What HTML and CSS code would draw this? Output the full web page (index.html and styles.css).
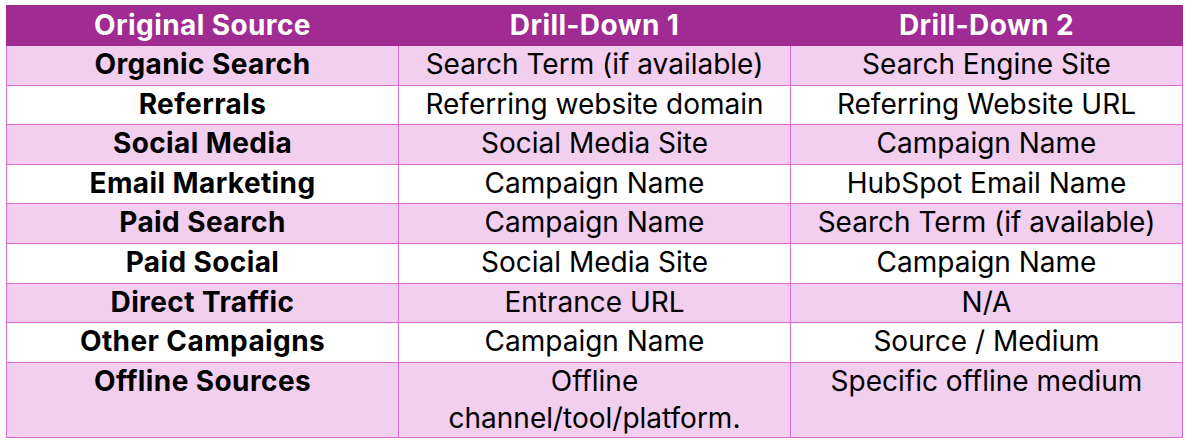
FILE: index.html
```html
<!DOCTYPE html>
<html>
<head>
<meta charset="utf-8">
<link rel="stylesheet" href="styles.css">
</head>
<body>
<div class="wrap">
<table class="grid">
<thead>
<tr><th>Original Source</th><th>Drill-Down 1</th><th>Drill-Down 2</th></tr>
</thead>
<tbody>
<tr class="band"><td class="src">Organic Search</td><td>Search Term (if available)</td><td>Search Engine Site</td></tr>
<tr><td class="src">Referrals</td><td>Referring website domain</td><td>Referring Website URL</td></tr>
<tr class="band"><td class="src">Social Media</td><td>Social Media Site</td><td>Campaign Name</td></tr>
<tr><td class="src">Email Marketing</td><td>Campaign Name</td><td>HubSpot Email Name</td></tr>
<tr class="band"><td class="src">Paid Search</td><td>Campaign Name</td><td>Search Term (if available)</td></tr>
<tr><td class="src">Paid Social</td><td>Social Media Site</td><td>Campaign Name</td></tr>
<tr class="band"><td class="src">Direct Traffic</td><td>Entrance URL</td><td>N/A</td></tr>
<tr><td class="src">Other Campaigns</td><td>Campaign Name</td><td>Source / Medium</td></tr>
<tr class="band"><td class="src">Offline Sources</td><td>Offline<br>channel/tool/platform.</td><td>Specific offline medium</td></tr>
</tbody>
</table>
</div>
</body>
</html>
```

FILE: styles.css
```css
html, body {
  margin: 0;
  padding: 0;
  background: #ffffff;
}
.wrap {
  padding: 5px 6px;
}
.grid {
  border-collapse: collapse;
  width: 1177px;
  table-layout: fixed;
  font-family: Inter, "Open Sans", sans-serif;
  font-size: 28px;
  color: #000000;
}
.grid th {
  background: #a02b93;
  color: #ffffff;
  font-weight: 700;
  height: 39px;
  line-height: 38px;
  padding: 0;
  border: 1px solid #a02b93;
  text-align: center;
  vertical-align: top;
  letter-spacing: 0.4px;
}
.grid td {
  border: 1px solid #d86dcd;
  padding: 0;
  height: 38.6px;
  line-height: 37px;
  text-align: center;
  vertical-align: top;
}
.grid td.src {
  font-weight: 700;
  letter-spacing: 0.4px;
}
.grid tr.band td {
  background: #f2ceef;
}
```
